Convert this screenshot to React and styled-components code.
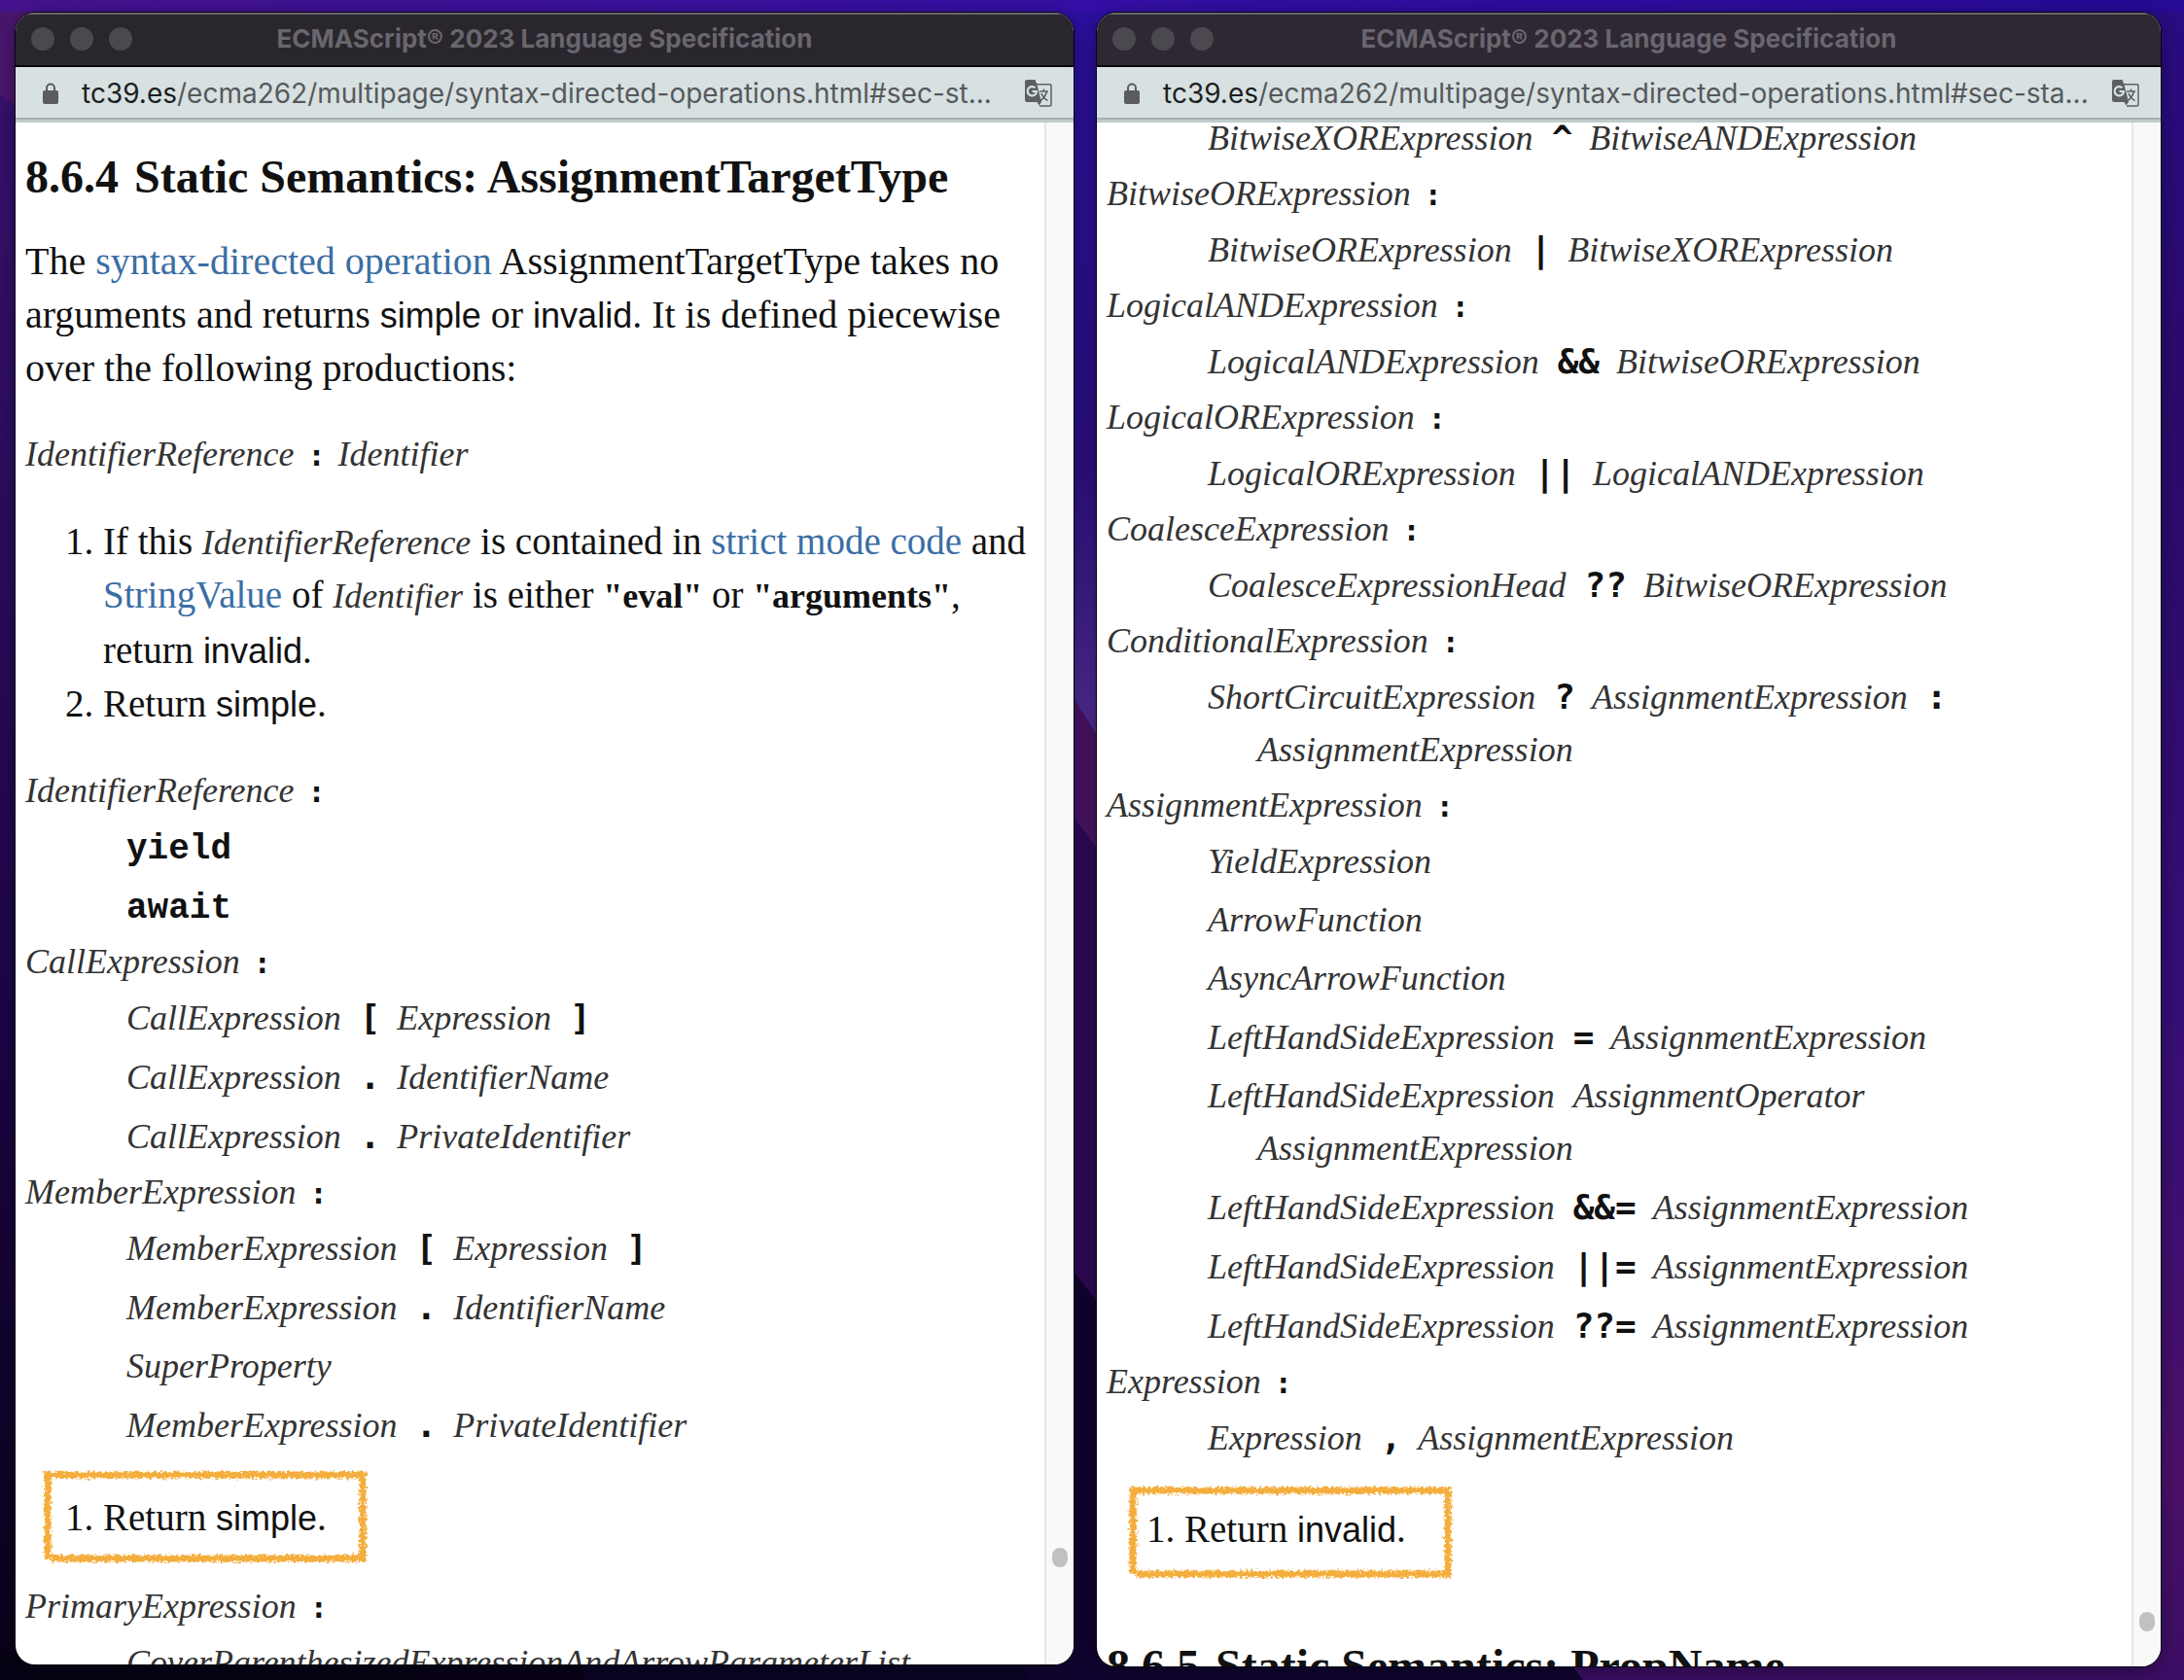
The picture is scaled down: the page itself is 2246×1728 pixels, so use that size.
import React from "react";
import styled, { createGlobalStyle } from "styled-components";

const serif = '"Liberation Serif", "Times New Roman", serif';
const sans = '"Liberation Sans", Arial, sans-serif';
const typewriter = '"Liberation Mono", "Courier New", monospace';
const symbols = '"DejaVu Sans Mono", Menlo, monospace';
const ui = 'Inter, Roboto, sans-serif';

const GlobalStyle = createGlobalStyle`
  *, *::before, *::after { box-sizing: border-box; }
  body { margin: 0; background: #14052f; }
`;

const Desktop = styled.main`
  position: relative;
  isolation: isolate;
  height: 100vh;
  padding: 13px 24px 14px 16px;
  display: grid;
  grid-template-columns: minmax(0, 1088fr) minmax(0, 1094fr);
  gap: 24px;
  overflow: hidden;
`;

const WallpaperArt = styled.svg`
  position: absolute;
  inset: 0;
  z-index: -1;
  width: 100%;
  height: 100%;
`;

const Frame = styled.section`
  display: flex;
  flex-direction: column;
  min-width: 0;
  min-height: 0;
  margin-bottom: ${(p) => (p.$short ? 2 : 0)}px;
  border-radius: 20px;
  overflow: hidden;
  background: #fff;
  box-shadow: 0 0 0 1px #060312, 0 4px 24px rgba(0, 0, 0, 0.4);
`;

const TitleBar = styled.header`
  display: grid;
  grid-template-columns: 1fr auto 1fr;
  align-items: center;
  flex: none;
  height: 56px;
  padding: 0 16px;
  background: ${(p) => p.$tint};
  border-bottom: 2px solid #08070a;
  box-shadow: inset 0 2px 0 #68666c;
`;

const Lights = styled.div`
  display: flex;
  gap: 16px;
`;

const Light = styled.button`
  width: 24px;
  height: 24px;
  padding: 0;
  border: 0;
  border-radius: 50%;
  background: #4b484f;
`;

const WindowTitle = styled.h1`
  margin: 0;
  font: 700 26px/32px ${ui};
  color: #69666e;
  white-space: nowrap;
`;

const AddressBar = styled.div`
  display: flex;
  align-items: center;
  flex: none;
  height: 57px;
  padding: 0 22px 0 28px;
  background: #d8e1e1;
  border-bottom: 3px solid #bfcbcc;
  box-shadow: inset 0 -2px 0 #a6b1b1;
`;

const Address = styled.p`
  flex: 1;
  min-width: 0;
  margin: 0 0 0 24px;
  font: 400 28px/36px ${ui};
  color: #56595c;
  white-space: nowrap;
  overflow: hidden;

  b { font-weight: 400; color: #1c1f21; }
`;

const IconButton = styled.button`
  display: flex;
  padding: 0;
  border: 0;
  background: none;
`;

const Viewport = styled.div`
  display: flex;
  flex: 1;
  min-height: 0;
`;

const Page = styled.article`
  flex: 1;
  min-width: 0;
  padding: 0 10px;
  overflow: hidden;
  font: 400 39px/54px ${serif};
  color: #111;
`;

const PageContent = styled.div`
  margin-top: ${(p) => (p.$scrolled ? -14 : 28)}px;
`;

const ScrollTrack = styled.div`
  display: flex;
  flex-direction: column;
  align-items: center;
  flex: none;
  width: 30px;
  border-left: 2px solid #e6e6e6;
  background: #f9f9f9;
`;

const ScrollSpace = styled.div`
  flex: ${(p) => p.$grow} 0 0;
`;

const ScrollThumb = styled.div`
  width: 16px;
  height: 20px;
  border-radius: 8px;
  background: #c1c1c1;
`;

const SectionTitle = styled.h2`
  margin: 0;
  font: 700 48px/56px ${serif};
  white-space: nowrap;

  span { margin-right: 16px; }
`;

const Paragraph = styled.p`
  margin: 31px 0 34px;
  font-size: 40px;
  line-height: 55px;
`;

const Link = styled.a`
  color: #3a6ea5;
  text-decoration: none;
`;

const Const = styled.span`
  font: 400 36px/36px ${sans};
`;

const StringLiteral = styled.b`
  font-size: 36px;
`;

const Nt = styled.i`
  margin-right: ${(p) => (p.$inline ? 0 : 10)}px;
  font: italic 400 36px/36px ${serif};
  color: #333;
`;

const Terminal = styled.code`
  margin-right: 8px;
  font: 700 36px/36px ${(p) => (p.$word ? typewriter : symbols)};
`;

const Colon = styled.b`
  margin: 0 4px;
  font: 700 30px/36px ${symbols};
`;

const Production = styled.div`
  font-size: 36px;
  line-height: 55px;
`;

const Rhs = styled.div`
  padding: 3px 0 3px 155px;
  text-indent: -51px;
  line-height: 54px;

  & + &:has(code) { margin-top: 1px; }
`;

const Steps = styled.ol`
  margin: ${(p) => (p.$spaced ? "34px 0 35px" : "0")};
  padding-left: 80px;
  line-height: 55px;
`;

const Callout = styled.div`
  position: relative;
  margin: ${(p) => p.$margin};
  padding: 19px 0 20px;
`;

const CalloutArt = styled.svg`
  position: absolute;
  left: ${(p) => p.$left}px;
  top: ${(p) => p.$top}px;
  width: 338px;
  height: 100px;
  pointer-events: none;
`;

function Wallpaper() {
  return (
    <WallpaperArt viewBox="0 0 2246 1728" preserveAspectRatio="none" aria-hidden="true">
      <defs>
        <linearGradient id="left" x2="0" y2="1">
          <stop offset="0" stopColor="#3a1173" />
          <stop offset="0.25" stopColor="#2f0e63" />
          <stop offset="0.6" stopColor="#1d0548" />
          <stop offset="1" stopColor="#090219" />
        </linearGradient>
        <linearGradient id="middle" x2="0" y2="1">
          <stop offset="0" stopColor="#2c10a4" />
          <stop offset="0.55" stopColor="#2d1084" />
          <stop offset="1" stopColor="#613a9c" />
        </linearGradient>
        <linearGradient id="right" x2="0" y2="1">
          <stop offset="0" stopColor="#2a0c85" />
          <stop offset="0.25" stopColor="#2c0b6c" />
          <stop offset="0.6" stopColor="#370e78" />
          <stop offset="0.88" stopColor="#4c116a" />
          <stop offset="1" stopColor="#3c0d66" />
        </linearGradient>
        <linearGradient id="top">
          <stop offset="0" stopColor="#461390" />
          <stop offset="0.5" stopColor="#340fa8" />
          <stop offset="1" stopColor="#270a97" />
        </linearGradient>
      </defs>
      <rect width="2246" height="1728" fill="#110431" />
      <path d="M0 0H600V1728H0Z" fill="url(#left)" />
      <path d="M600 1690H1040L1058 1728H600Z" fill="#0b0326" />
      <path d="M0 0H60V140L0 98Z" fill="#4a1670" />
      <path d="M420 1700L434 1728H0V1700Z" fill="#070214" />
      <path d="M1000 0H1200V869L1104 719L1000 556Z" fill="url(#middle)" />
      <path d="M1080 682L1104 719L1127 755L1150 791V908L1127 872L1104 841L1080 808Z" fill="#4a1466" />
      <path d="M1080 808L1104 841L1127 872L1150 903V1366L1127 1337L1104 1308L1080 1278Z" fill="#30095a" />
      <path d="M1600 1690L1628 1728H2246V0H1600Z" fill="url(#right)" />
      <rect width="2246" height="12" fill="url(#top)" />
    </WallpaperArt>
  );
}

const LockIcon = () => (
  <svg width="16" height="22" viewBox="0 0 16 22" aria-hidden="true">
    <rect y="8" width="16" height="14" rx="2" fill="#5a5c60" />
    <path d="M4 9V5.500a4 4 0 0 1 8 0V9" fill="none" stroke="#5a5c60" strokeWidth="2" />
  </svg>
);

const TranslateIcon = () => (
  <svg width="28" height="28" viewBox="0 0 28 28" aria-hidden="true">
    <path d="M12 4.800H25.500a1.500 1.500 0 0 1 1.500 1.500V25.500a1.500 1.500 0 0 1-1.500 1.500H15" fill="none" stroke="#5c6063" strokeWidth="1.500" />
    <path d="M2 0H10.500L12.500 5L17 23L14.500 26.500L12.500 23H2a2 2 0 0 1-2-2V2a2 2 0 0 1 2-2Z" fill="#5c6063" />
    <path d="M10.500 8.300A4.700 4.700 0 1 0 12 12H7.500" fill="none" stroke="#d8e1e1" strokeWidth="2.200" />
    <path d="M15 12H24M19.500 9.500V12M22.500 12C21.500 16.500 19 19.500 15.500 22M17 14C18.500 17.500 20.500 20 23.500 21.500" fill="none" stroke="#5c6063" strokeWidth="1.600" />
  </svg>
);

function CrayonBox({ seed, left, top }) {
  const id = "crayon" + seed;
  return (
    <CalloutArt $left={left} $top={top} viewBox="0 0 338 100" aria-hidden="true">
      <filter id={id} x="-5%" y="-5%" width="110%" height="110%">
        <feTurbulence type="fractalNoise" baseFrequency="0.35" numOctaves="3" seed={seed} result="noise" />
        <feDisplacementMap in="SourceGraphic" in2="noise" scale="8" xChannelSelector="R" yChannelSelector="G" />
      </filter>
      <path d="M7 93V7H331V93H10" fill="none" stroke="#f4ae3d" strokeWidth="7" filter={`url(#${id})`} />
    </CalloutArt>
  );
}

function BrowserWindow({ tint, address, short, scrolled, above, below, children }) {
  return (
    <Frame $short={short}>
      <TitleBar $tint={tint}>
        <Lights>
          <Light aria-label="Close" />
          <Light aria-label="Minimize" />
          <Light aria-label="Zoom" />
        </Lights>
        <WindowTitle>ECMAScript® 2023 Language Specification</WindowTitle>
      </TitleBar>
      <AddressBar>
        <LockIcon />
        <Address><b>tc39.es</b>{address}</Address>
        <IconButton aria-label="Translate this page"><TranslateIcon /></IconButton>
      </AddressBar>
      <Viewport>
        <Page><PageContent $scrolled={scrolled}>{children}</PageContent></Page>
        <ScrollTrack>
          <ScrollSpace $grow={above} />
          <ScrollThumb />
          <ScrollSpace $grow={below} />
        </ScrollTrack>
      </Viewport>
    </Frame>
  );
}

/* Right-hand sides are written as plain strings; capitalised words are nonterminals. */
const Symbols = ({ text }) =>
  text.split(" ").map((word, i) => (
    <React.Fragment key={i}>
      {/^[A-Z]/.test(word)
        ? <Nt>{word}</Nt>
        : <Terminal $word={/^[a-z]/.test(word)}>{word}</Terminal>}{" "}
    </React.Fragment>
  ));

const Grammar = ({ items }) =>
  items.map(([name, ...alternatives], i) => (
    <Production key={i}>
      {name && <div><Nt>{name}</Nt><Colon>:</Colon></div>}
      {alternatives.map((alt) => <Rhs key={alt}><Symbols text={alt} /></Rhs>)}
    </Production>
  ));

const simpleGrammar = [
  ["IdentifierReference", "yield", "await"],
  ["CallExpression", "CallExpression [ Expression ]", "CallExpression . IdentifierName", "CallExpression . PrivateIdentifier"],
  ["MemberExpression", "MemberExpression [ Expression ]", "MemberExpression . IdentifierName", "SuperProperty", "MemberExpression . PrivateIdentifier"],
];

const invalidGrammar = [
  [null, "BitwiseXORExpression ^ BitwiseANDExpression"],
  ["BitwiseORExpression", "BitwiseORExpression | BitwiseXORExpression"],
  ["LogicalANDExpression", "LogicalANDExpression && BitwiseORExpression"],
  ["LogicalORExpression", "LogicalORExpression || LogicalANDExpression"],
  ["CoalesceExpression", "CoalesceExpressionHead ?? BitwiseORExpression"],
  ["ConditionalExpression", "ShortCircuitExpression ? AssignmentExpression : AssignmentExpression"],
  [
    "AssignmentExpression",
    "YieldExpression",
    "ArrowFunction",
    "AsyncArrowFunction",
    "LeftHandSideExpression = AssignmentExpression",
    "LeftHandSideExpression AssignmentOperator AssignmentExpression",
    "LeftHandSideExpression &&= AssignmentExpression",
    "LeftHandSideExpression ||= AssignmentExpression",
    "LeftHandSideExpression ??= AssignmentExpression",
  ],
  ["Expression", "Expression , AssignmentExpression"],
];

export default function App() {
  return (
    <>
      <GlobalStyle />
      <Desktop>
        <Wallpaper />
        <BrowserWindow short tint="#2a262d" above={1466} below={100}
          address="/ecma262/multipage/syntax-directed-operations.html#sec-st...">
          <SectionTitle><span>8.6.4</span>Static Semantics: AssignmentTargetType</SectionTitle>
          <Paragraph>
            The <Link href="#sdo">syntax-directed operation</Link> AssignmentTargetType takes no
            arguments and returns <Const>simple</Const> or <Const>invalid</Const>. It is defined
            piecewise over the following productions:
          </Paragraph>
          <Production><Nt>IdentifierReference</Nt><Colon>:</Colon> <Nt>Identifier</Nt></Production>
          <Steps $spaced>
            <li>
              If this <Nt $inline>IdentifierReference</Nt> is contained in{" "}
              <Link href="#strict">strict mode code</Link> and{" "}
              <Link href="#stringvalue">StringValue</Link> of <Nt $inline>Identifier</Nt> is either{" "}
              <StringLiteral>"eval"</StringLiteral> or <StringLiteral>"arguments"</StringLiteral>,
              return <Const>invalid</Const>.
            </li>
            <li>Return <Const>simple</Const>.</li>
          </Steps>
          <Grammar items={simpleGrammar} />
          <Callout $margin="18px 0 17px">
            <CrayonBox seed={3} left={16} top={-4} />
            <Steps><li>Return <Const>simple</Const>.</li></Steps>
          </Callout>
          <Grammar items={[["PrimaryExpression", "CoverParenthesizedExpressionAndArrowParameterList"]]} />
        </BrowserWindow>
        <BrowserWindow scrolled tint="#2e2832" above={1530} below={36}
          address="/ecma262/multipage/syntax-directed-operations.html#sec-sta...">
          <Grammar items={invalidGrammar} />
          <Callout $margin="17px 0 66px">
            <CrayonBox seed={8} left={20} top={0} />
            <Steps><li>Return <Const>invalid</Const>.</li></Steps>
          </Callout>
          <SectionTitle><span>8.6.5</span>Static Semantics: PropName</SectionTitle>
        </BrowserWindow>
      </Desktop>
    </>
  );
}
